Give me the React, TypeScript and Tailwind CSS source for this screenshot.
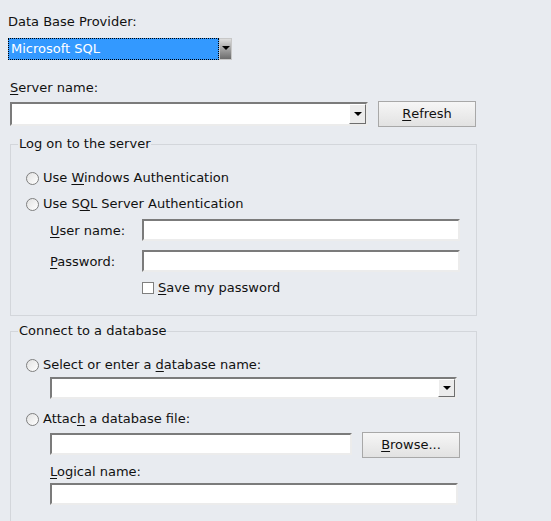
import {ReactNode} from 'react';

function Mn({children}: {children: ReactNode}) {
  return <span className="underline decoration-1 underline-offset-[2px]">{children}</span>;
}

function TextBox({className = ''}: {className?: string}) {
  return (
    <div
      className={`h-[22px] shrink-0 bg-white border-2 border-t-[#7b7b7b] border-l-[#7b7b7b] border-b-[#ececec] border-r-[#ececec] ${className}`}
    />
  );
}

function ComboBox({className = ''}: {className?: string}) {
  return (
    <div
      className={`flex justify-end shrink-0 bg-white border-2 border-t-[#7b7b7b] border-l-[#7b7b7b] border-b-[#ececec] border-r-[#ececec] ${className}`}>
      <div className="w-[17px] h-full flex items-center justify-center bg-[#ececec] border border-t-white border-l-white border-b-[#6e6e6e] border-r-[#6e6e6e]">
        <span className="w-0 h-0 border-x-[4px] border-x-transparent border-t-[4px] border-t-black" />
      </div>
    </div>
  );
}

function Radio({children}: {children: ReactNode}) {
  return (
    <div className="flex items-center h-[16px] ml-[15px]">
      <span className="w-[13px] h-[13px] rounded-full border border-[#7f7f7f] bg-gradient-to-br from-[#e2e2e2] to-white" />
      <span className="ml-[4px]">{children}</span>
    </div>
  );
}

function Button({children, className = ''}: {children: ReactNode; className?: string}) {
  return (
    <div
      className={`w-[98px] h-[26px] shrink-0 flex items-center justify-center border border-[#a8a8a8] bg-gradient-to-b from-[#f6f6f6] to-[#e2e2e2] ${className}`}>
      {children}
    </div>
  );
}

function GroupBox({title, className = '', children}: {title: string; className?: string; children: ReactNode}) {
  return (
    <fieldset className={`ml-[10px] w-[467px] border border-[#d3d6db] ${className}`}>
      <legend className="ml-[7px] px-[1px] leading-[16px]">{title}</legend>
      <div className="flex flex-col">{children}</div>
    </fieldset>
  );
}

export default function App() {
  return (
    <div className="w-[551px] h-[521px] overflow-hidden bg-[#e8ebf0] text-[13px] leading-[16px] text-[#111] font-['DejaVu_Sans',Verdana,sans-serif] pt-[14px]">
      <div className="ml-[8px] h-[16px]">Data Base Provider:</div>

      {/* provider drop-down */}
      <div className="mt-[8px] ml-[8px] flex h-[22px]">
        <div className="w-[211px] h-full flex items-center pl-[2px] bg-[#3399ff] border border-dotted border-black text-white">
          Microsoft SQL
        </div>
        <div className="w-[13px] h-full flex items-center justify-center bg-gradient-to-b from-[#dedede] to-[#6c6c6c] border border-[#c8c8c8]">
          <span className="w-0 h-0 border-x-[4px] border-x-transparent border-t-[4px] border-t-black -mt-[2px]" />
        </div>
      </div>

      <div className="mt-[20px] ml-[10px] h-[16px]">
        <Mn>S</Mn>erver name:
      </div>
      <div className="mt-[5px] ml-[10px] flex items-start">
        <ComboBox className="w-[358px] h-[24px] mt-[1px]" />
        <Button className="ml-[10px]">
          <Mn>R</Mn>efresh
        </Button>
      </div>

      <GroupBox title="Log on to the server" className="mt-[9px] h-[180px]">
        <div className="mt-[18px]">
          <Radio>
            Use <Mn>W</Mn>indows Authentication
          </Radio>
        </div>
        <div className="mt-[10px]">
          <Radio>
            Use S<Mn>Q</Mn>L Server Authentication
          </Radio>
        </div>
        <div className="mt-[7px] ml-[39px] flex items-center h-[22px]">
          <span className="w-[92px] pt-[1px]">
            <Mn>U</Mn>ser name:
          </span>
          <TextBox className="w-[318px]" />
        </div>
        <div className="mt-[9px] ml-[39px] flex items-center h-[22px]">
          <span className="w-[92px] pt-[1px]">
            <Mn>P</Mn>assword:
          </span>
          <TextBox className="w-[318px]" />
        </div>
        <div className="mt-[8px] ml-[131px] flex items-center h-[16px]">
          <span className="w-[12px] h-[12px] border border-[#7f7f7f] bg-white" />
          <span className="ml-[4px]">
            <Mn>S</Mn>ave my password
          </span>
        </div>
      </GroupBox>

      <GroupBox title="Connect to a database" className="mt-[7px] h-[210px]">
        <div className="mt-[18px]">
          <Radio>
            Select or enter a <Mn>d</Mn>atabase name:
          </Radio>
        </div>
        <ComboBox className="mt-[4px] ml-[39px] w-[407px] h-[22px]" />
        <div className="mt-[12px]">
          <Radio>
            Attac<Mn>h</Mn> a database file:
          </Radio>
        </div>
        <div className="mt-[5px] ml-[39px] flex items-start">
          <TextBox className="w-[302px] mt-[1px]" />
          <Button className="ml-[10px]">
            <Mn>B</Mn>rowse...
          </Button>
        </div>
        <div className="mt-[6px] ml-[39px] h-[16px]">
          <Mn>L</Mn>ogical name:
        </div>
        <TextBox className="mt-[3px] ml-[39px] w-[408px]" />
      </GroupBox>
    </div>
  );
}
